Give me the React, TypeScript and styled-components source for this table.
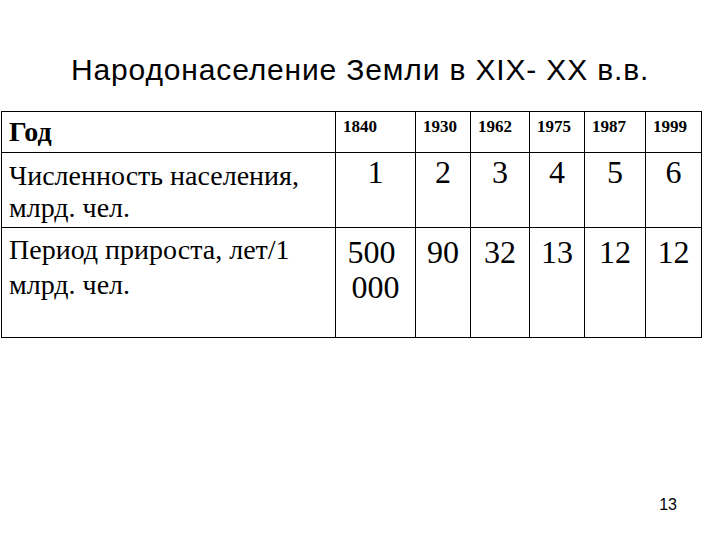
import styled, { createGlobalStyle } from "styled-components"

const GlobalStyle = createGlobalStyle`
  html, body {
    margin: 0;
    padding: 0;
    background: #fff;
  }
  body {
    width: 720px;
    height: 540px;
    overflow: hidden;
  }
`

const columns = [334, 80, 55, 59, 55, 61, 56]

const rows = {
  years: ["1840", "1930", "1962", "1975", "1987", "1999"],
  population: ["1", "2", "3", "4", "5", "6"],
  period: ["500 000", "90", "32", "13", "12", "12"],
}

const Slide = styled.div`
  display: flex;
  flex-direction: column;
  width: 720px;
  height: 540px;
  background: #fff;
  color: #000;
`

const Title = styled.h1`
  margin: 0;
  padding: 55px 0 0 71px;
  font-family: "Liberation Sans", Arial, sans-serif;
  font-weight: normal;
  font-size: 30px;
  line-height: 30px;
  letter-spacing: 0.85px;
  white-space: nowrap;
`

const Table = styled.table`
  margin: 26px 0 0 1px;
  width: 700px;
  table-layout: fixed;
  border-collapse: collapse;
  font-family: "Liberation Serif", "Times New Roman", serif;
`

const Col = styled.col<{ $w: number }>`
  width: ${(p) => p.$w}px;
`

const Row = styled.tr<{ $h: number }>`
  height: ${(p) => p.$h}px;
`

const Cell = styled.td`
  border: 1px solid #000;
  vertical-align: top;
  padding: 0;
`

const LabelCell = styled(Cell)<{ $top: number; $lh: number; $bold?: boolean }>`
  padding: ${(p) => p.$top}px 6px 0 7px;
  font-size: 28px;
  line-height: ${(p) => p.$lh}px;
  font-weight: ${(p) => (p.$bold ? "bold" : "normal")};
`

const YearCell = styled(Cell)`
  padding: 5px 0 0 7px;
  font-size: 17px;
  line-height: 20px;
  font-weight: bold;
`

const ValueCell = styled(Cell)<{ $top: number }>`
  padding: ${(p) => p.$top}px 0 0 0;
  font-size: 32px;
  line-height: 35px;
  text-align: center;
  white-space: break-spaces;
`

const Footer = styled.div`
  margin-top: auto;
  display: flex;
  justify-content: flex-end;
  padding: 0 43px 27px 0;
  font-family: "Liberation Sans", Arial, sans-serif;
  font-size: 16px;
  line-height: 16px;
`

export default function App() {
  return (
    <>
      <GlobalStyle />
      <Slide>
        <Title>Народонаселение Земли в XIX- XX в.в.</Title>
        <Table>
          <colgroup>
            {columns.map((w, i) => (
              <Col key={i} $w={w} />
            ))}
          </colgroup>
          <tbody>
            <Row $h={41}>
              <LabelCell $top={4} $lh={32} $bold>
                Год
              </LabelCell>
              {rows.years.map((y) => (
                <YearCell key={y}>{y}</YearCell>
              ))}
            </Row>
            <Row $h={75}>
              <LabelCell $top={7} $lh={32}>
                Численность населения, млрд. чел.
              </LabelCell>
              {rows.population.map((v, i) => (
                <ValueCell key={i} $top={2}>
                  {v}
                </ValueCell>
              ))}
            </Row>
            <Row $h={110}>
              <LabelCell $top={4} $lh={35}>
                Период прироста, лет/1 млрд. чел.
              </LabelCell>
              {rows.period.map((v, i) => (
                <ValueCell key={i} $top={7}>
                  {v}
                </ValueCell>
              ))}
            </Row>
          </tbody>
        </Table>
        <Footer>13</Footer>
      </Slide>
    </>
  )
}
